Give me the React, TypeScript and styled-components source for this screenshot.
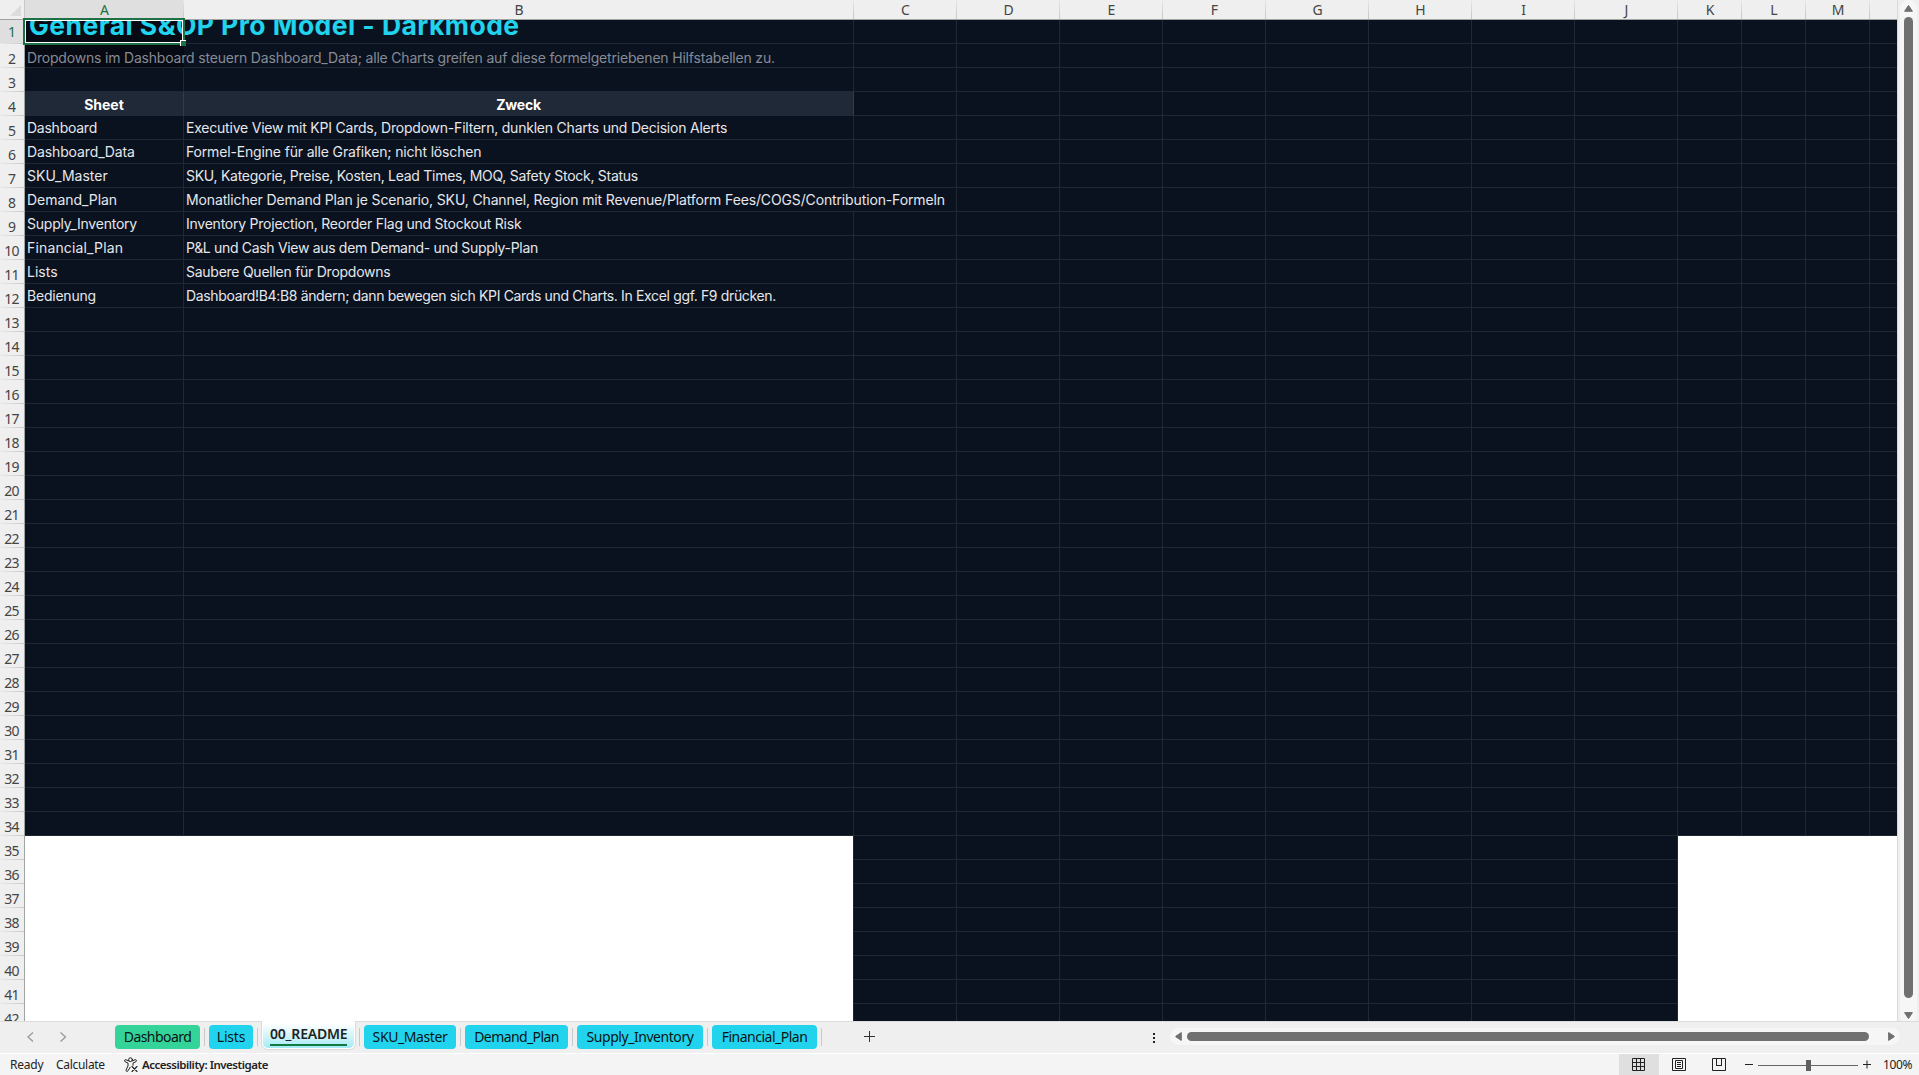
import React from "react";
import styled, { createGlobalStyle, css } from "styled-components";

const CELL_FONT = `Inter, "Liberation Sans", sans-serif`;
const UI_FONT = `"Noto Sans", "Open Sans", sans-serif`;

const Global = createGlobalStyle`
  html, body { margin: 0; padding: 0; overflow: hidden; }
  * { box-sizing: border-box; }
`;

const Window = styled.div`
  width: 1919px;
  height: 1075px;
  display: flex;
  flex-direction: column;
  overflow: hidden;
  background: #efefef;
  font-family: ${UI_FONT};
  color: #222;
`;

const Workspace = styled.div`
  display: flex;
  height: 1021px;
  flex: none;
`;

const Sheet = styled.div`
  width: 1897px;
  height: 1021px;
  display: flex;
  flex-direction: column;
  overflow: hidden;
`;

const ColumnHeads = styled.div`
  display: flex;
  height: 20px;
  flex: none;
  border-bottom: 1px solid #a0a5a2;
`;

const Corner = styled.div`
  width: 25px;
  flex: none;
  display: flex;
  justify-content: flex-end;
  align-items: flex-end;
  padding: 0 3px 3px 0;
  border-right: 1px solid #c8c8c8;
`;

const ColumnHead = styled.div<{ $w: number; $active?: boolean }>`
  width: ${(p) => p.$w}px;
  flex: none;
  display: flex;
  align-items: center;
  justify-content: center;
  padding: 1px 0 0 1px;
  font-size: 14px;
  line-height: 16px;
  color: ${(p) => (p.$active ? "#1e7145" : "#444")};
  background: ${(p) => (p.$active ? "#dfdfdf" : "#efefef")};
  border-right: 1px solid;
  border-image: linear-gradient(#e9e9e9, #c4c4c4) 1;
`;

const Row = styled.div`
  display: flex;
  height: 24px;
  flex: none;
`;

const RowHead = styled.div<{ $active?: boolean }>`
  width: 25px;
  flex: none;
  display: flex;
  align-items: center;
  justify-content: center;
  padding: ${(p) => (p.$active ? "0 1px 2px 0" : "5px 1px 0 0")};
  font-size: 14px;
  line-height: 19px;
  letter-spacing: -0.8px;
  color: ${(p) => (p.$active ? "#1e7145" : "#444")};
  background: ${(p) => (p.$active ? "#dfdfdf" : "#efefef")};
  border-right: 1px solid #a0a5a2;
  background-image: linear-gradient(90deg, #e9e9e9, #c8c8c8);
  background-size: 100% 1px;
  background-position: 0 100%;
  background-repeat: no-repeat;
`;

type Kind = "normal" | "title" | "muted" | "head";

const Cell = styled.div<{
  $w: number;
  $blank?: boolean;
  $head?: boolean;
  $open?: boolean;
  $edge?: boolean;
  $dim?: boolean;
}>`
  width: ${(p) => p.$w}px;
  flex: none;
  height: 24px;
  white-space: nowrap;
  background: ${(p) => (p.$dim ? "#070a12" : "#0b121f")};
  border-right: 1px solid ${(p) => (p.$open ? "transparent" : "#1f2933")};
  border-bottom: 1px solid #1f2933;
  ${(p) =>
    p.$head &&
    css`
      background: #1f2937;
      border-color: #1f2937 #323c49 #1f2937 #1f2937;
      text-align: center;
      box-shadow: 0 -1px 0 #1f2937;
    `}
  ${(p) =>
    p.$blank &&
    css`
      background: #fff;
      border-bottom: 0;
      border-color: ${p.$edge ? "#1f2933" : "#fff"};
    `}
`;

const CellText = styled.span<{ $kind: Kind; $ls: number }>`
  position: relative;
  z-index: 1;
  display: block;
  padding-left: ${(p) => (p.$kind === "head" ? 0 : 2)}px;
  font-family: ${CELL_FONT};
  font-size: 14px;
  line-height: 24px;
  letter-spacing: ${(p) => p.$ls}px;
  color: #e5e7eb;
  ${(p) => p.$kind === "muted" && css`color: #858b96; line-height: 28px;`}
  ${(p) => p.$kind === "head" && css`color: #fff; font-weight: 700; line-height: 25px;`}
  ${(p) =>
    p.$kind === "title" &&
    css`
      color: #22d3ee;
      font-weight: 700;
      font-size: 26.5px;
      padding-left: 4px;
      line-height: 32px;
      margin-top: -11px;
    `}
`;

const TitleClip = styled.div`
  height: 24px;
  width: 600px;
  overflow: hidden;
  position: relative;
  z-index: 1;
`;

const Selection = styled.div`
  position: absolute;
  z-index: 3;
  left: 23px;
  top: 18px;
  width: 162px;
  height: 27px;
  border: 2px solid #1e7145;
  box-shadow: inset 0 0 0 1px #fff;
`;

const FillHandle = styled.div`
  position: absolute;
  right: -3px;
  bottom: -3px;
  width: 6px;
  height: 6px;
  background: #1e7145;
  border-left: 1px solid #fff;
  border-top: 1px solid #fff;
`;

const VerticalBar = styled.div`
  width: 22px;
  height: 1024px;
  padding-left: 2px;
  border-left: 1px solid #d9d9d9;
`;

const VerticalTrack = styled.div`
  width: 17px;
  height: 1024px;
  border-radius: 9px;
  background: #f6f6f6;
  display: flex;
  flex-direction: column;
  align-items: center;
  padding-top: 5px;
`;

const VerticalThumb = styled.div`
  width: 9px;
  height: 981px;
  flex: none;
  margin: 5px 0 14px;
  border-radius: 5px;
  background: #707070;
`;

const TabBar = styled.div`
  height: 32px;
  flex: none;
  display: flex;
  border-top: 1px solid #dcdcdc;
  background: #efefef;
`;

const Arrows = styled.div`
  width: 115px;
  padding: 9px 0 0 25px;
  display: flex;
  gap: 21px;
  flex: none;
`;

const Tab = styled.div<{ $w: number; $c?: string; $ls: number }>`
  width: ${(p) => p.$w}px;
  height: 24px;
  margin-top: 3px;
  flex: none;
  border-radius: 4px;
  background: ${(p) => p.$c || "#22d3ee"};
  color: #0a1414;
  font-size: 14px;
  line-height: 24px;
  text-align: center;
  white-space: nowrap;
  letter-spacing: ${(p) => p.$ls}px;
`;

const Divider = styled.div`
  width: 9px;
  height: 18px;
  margin-top: 6px;
  flex: none;
  display: flex;
  justify-content: center;
  &::before {
    content: "";
    width: 1px;
    background: #c9c9c9;
  }
`;

const ActiveTab = styled.div`
  width: 93px;
  height: 28px;
  margin-top: -1px;
  flex: none;
  padding: 0 7px;
  border: 1px solid #fff;
  border-top: 0;
  border-radius: 0 0 6px 6px;
  background: linear-gradient(#fff 10%, #a4eaf5);
  box-shadow: 0 0 1px 1px #d9d9d9;
  clip-path: inset(0 -2px -2px -2px);
`;

const ActiveLabel = styled.div`
  height: 25px;
  border-bottom: 2px solid #107c41;
  color: #222;
  font-weight: 600;
  font-size: 14px;
  line-height: 26px;
  letter-spacing: -0.2px;
  text-align: center;
  white-space: nowrap;
`;

const AddSheet = styled.div`
  display: flex;
  margin: 8px 0 0 37px;
  width: 13px;
`;

const Dots = styled.div`
  margin: 11px 0 0 auto;
  width: 2px;
  display: grid;
  gap: 2px;
  align-content: start;
  i { width: 2px; height: 2px; background: #222; }
`;

const HorizontalTrack = styled.div`
  width: 730px;
  height: 17px;
  margin: 6px 19px 0 15px;
  padding: 0 5px;
  border-radius: 9px;
  background: #f6f6f6;
  display: flex;
  align-items: center;
`;

const HorizontalThumb = styled.div`
  width: 682px;
  height: 9px;
  margin: 0 19px 0 5px;
  border-radius: 5px;
  background: #707070;
`;

const StatusBar = styled.div`
  height: 22px;
  flex: none;
  display: flex;
  align-items: center;
  border-top: 1px solid #fff;
  background: #f4f4f4;
  font-size: 12px;
  color: #222;
`;

const StatusText = styled.div<{ $w: number; $bold?: boolean; $ls?: number }>`
  width: ${(p) => p.$w}px;
  font-size: ${(p) => (p.$bold ? 11.5 : 12)}px;
  font-weight: ${(p) => (p.$bold ? 600 : 400)};
  letter-spacing: ${(p) => p.$ls ?? 0}px;
  white-space: nowrap;
`;

const Ready = styled.div`
  display: flex;
  align-items: center;
  padding-left: 10px;
`;

const ViewButton = styled.div<{ $active?: boolean }>`
  width: 40px;
  height: 21px;
  display: flex;
  align-items: center;
  justify-content: center;
  background: ${(p) => (p.$active ? "#dfdfdf" : "transparent")};
`;

const Views = styled.div`
  display: flex;
  margin-left: auto;
`;

const Zoom = styled.div`
  width: 180px;
  display: flex;
  align-items: center;
  letter-spacing: -0.4px;
`;

const DARK_END = 34;
const columns: [string, number][] = [
  ["A", 159], ["B", 670], ["C", 103], ["D", 103], ["E", 103], ["F", 103], ["G", 103],
  ["H", 103], ["I", 103], ["J", 103], ["K", 64], ["L", 64], ["M", 64], ["", 28],
];

type Entry = { t: string; ls?: number };
const rows: Record<number, [Entry, Entry?]> = {
  1: [{ t: "General S&OP Pro Model - Darkmode", ls: 0.45 }],
  2: [{ t: "Dropdowns im Dashboard steuern Dashboard_Data; alle Charts greifen auf diese formelgetriebenen Hilfstabellen zu.", ls: -0.19 }],
  4: [{ t: "Sheet" }, { t: "Zweck", ls: -0.2 }],
  5: [{ t: "Dashboard", ls: -0.25 }, { t: "Executive View mit KPI Cards, Dropdown-Filtern, dunklen Charts und Decision Alerts", ls: -0.215 }],
  6: [{ t: "Dashboard_Data", ls: -0.12 }, { t: "Formel-Engine für alle Grafiken; nicht löschen", ls: -0.16 }],
  7: [{ t: "SKU_Master" }, { t: "SKU, Kategorie, Preise, Kosten, Lead Times, MOQ, Safety Stock, Status", ls: -0.27 }],
  8: [{ t: "Demand_Plan", ls: -0.05 }, { t: "Monatlicher Demand Plan je Scenario, SKU, Channel, Region mit Revenue/Platform Fees/COGS/Contribution-Formeln", ls: -0.135 }],
  9: [{ t: "Supply_Inventory", ls: -0.22 }, { t: "Inventory Projection, Reorder Flag und Stockout Risk", ls: -0.24 }],
  10: [{ t: "Financial_Plan", ls: 0.15 }, { t: "P&L und Cash View aus dem Demand- und Supply-Plan", ls: -0.32 }],
  11: [{ t: "Lists" }, { t: "Saubere Quellen für Dropdowns", ls: -0.26 }],
  12: [{ t: "Bedienung", ls: -0.22 }, { t: "Dashboard!B4:B8 ändern; dann bewegen sich KPI Cards und Charts. In Excel ggf. F9 drücken.", ls: -0.35 }],
};

const kindOf = (r: number): Kind => (r === 1 ? "title" : r === 2 ? "muted" : r === 4 ? "head" : "normal");

function GridRow({ n }: { n: number }) {
  const kind = kindOf(n);
  return (
    <Row>
      <RowHead $active={n === 1}>{n}</RowHead>
      {columns.map(([, w], i) => {
        const entry = rows[n]?.[i as 0 | 1];
        const open = (n <= 2 && i === 0) || (n === 8 && i === 1);
        const text = entry && (
          <CellText $kind={kind} $ls={entry.ls ?? 0}>{entry.t}</CellText>
        );
        return (
          <Cell
            key={i}
            $w={w}
            $head={n === 4 && i < 2}
            $open={open}
            $dim={n <= 2 && i === 0}
            $blank={n > DARK_END && (i < 2 || i > 9)}
            $edge={i === 1}
          >
            {kind === "title" && text ? <TitleClip>{text}</TitleClip> : text}
          </Cell>
        );
      })}
    </Row>
  );
}

const Chevron = ({ d }: { d: string }) => (
  <svg width="12" height="12" viewBox="0 0 12 12" fill="none" stroke="#9a9a9a" strokeWidth="1.3"><path d={d} /></svg>
);

const Glyph = styled.svg`
  display: block;
  flex: none;
`;

const Triangle = ({ d, w, h }: { d: string; w: number; h: number }) => (
  <Glyph width={w} height={h} viewBox={`0 0 ${w} ${h}`}>
    <path d={d} fill="#707070" stroke="#707070" strokeWidth="1" strokeLinejoin="round" />
  </Glyph>
);

const AccessibilityIcon = () => (
  <Glyph width="19" height="16" viewBox="0 0 19 16" fill="none" stroke="#222" strokeWidth="1" strokeLinecap="round" strokeLinejoin="round">
    <circle cx="7.5" cy="2.7" r="1.9" />
    <path d="M5.7 3.9L3 2.8C1.6 2.3 .8 4 2.1 4.7L5 6.1V8.8L3.1 13C2.7 14.4 4.2 15 4.9 13.9L7.2 10.2" />
    <path d="M9.3 3.9L12 2.8C13.4 2.3 14.2 4 12.9 4.7L10 6.1V8.3" />
    <path d="M9 9.5L14 14.5M14 9.5L9 14.5" strokeWidth="1.1" />
  </Glyph>
);

export default function App() {
  return (
    <Window>
      <Global />
      <Workspace>
        <Sheet>
          <ColumnHeads>
            <Corner><Glyph width="11" height="11"><path d="M11 0V11H0Z" fill="#dcdcdc" /></Glyph></Corner>
            {columns.map(([name, w], i) => (
              <ColumnHead key={i} $w={w} $active={i === 0}>{name}</ColumnHead>
            ))}
          </ColumnHeads>
          {Array.from({ length: 42 }, (_, i) => <GridRow key={i} n={i + 1} />)}
          <Selection><FillHandle /></Selection>
        </Sheet>
        <VerticalBar>
          <VerticalTrack>
            <Triangle w={9} h={7} d="M4.2 .8H4.8L8.4 6.3H.6Z" />
            <VerticalThumb />
            <Triangle w={9} h={7} d="M.6 .6H8.4L4.8 6.2H4.2Z" />
          </VerticalTrack>
        </VerticalBar>
      </Workspace>
      <TabBar>
        <Arrows><Chevron d="M8 1.5L3 6L8 10.5" /><Chevron d="M2.5 1.5L7.5 6L2.5 10.5" /></Arrows>
        <Tab $w={85} $ls={-0.55} $c="#34d399">Dashboard</Tab><Divider />
        <Tab $w={44} $ls={-0.2}>Lists</Tab><Divider />
        <ActiveTab><ActiveLabel>00_README</ActiveLabel></ActiveTab><Divider />
        <Tab $w={92} $ls={-0.4}>SKU_Master</Tab><Divider />
        <Tab $w={103} $ls={-0.6}>Demand_Plan</Tab><Divider />
        <Tab $w={126} $ls={-0.45}>Supply_Inventory</Tab><Divider />
        <Tab $w={105} $ls={-0.5}>Financial_Plan</Tab><Divider />
        <AddSheet><Glyph width="13" height="13" stroke="#333"><path d="M1 6.5H12M6.5 1V12" /></Glyph></AddSheet>
        <Dots><i /><i /><i /></Dots>
        <HorizontalTrack>
          <Triangle w={7} h={9} d="M6.3 .6V8.4L.8 4.8V4.2Z" />
          <HorizontalThumb />
          <Triangle w={7} h={9} d="M.6 .6L6.2 4.2V4.8L.6 8.4Z" />
        </HorizontalTrack>
      </TabBar>
      <StatusBar>
        <Ready>
          <StatusText $w={46} $ls={-0.2}>Ready</StatusText>
          <StatusText $w={67} $ls={-0.3}>Calculate</StatusText>
          <AccessibilityIcon />
          <StatusText $w={130} $bold $ls={-0.47}>Accessibility: Investigate</StatusText>
        </Ready>
        <Views>
          <ViewButton $active><Glyph width="14" height="13" fill="none" stroke="#222"><path d="M.5.5h12v12H.5zM4.5 0v13M8.5 0v13M0 4.5h13M0 8.5h13" /></Glyph></ViewButton>
          <ViewButton><Glyph width="14" height="13" fill="none" stroke="#222"><path d="M.5.5h13v12H.5zM3.5 2.5h7v8h-7zM5 4.5h4M5 6.5h4M5 8.5h4" /></Glyph></ViewButton>
          <ViewButton><Glyph width="14" height="13" fill="none" stroke="#222"><path d="M.5.5h13v12H.5zM4.5 0v7M9.5 0v7.5M4 7.5h6" /></Glyph></ViewButton>
        </Views>
        <Zoom>
          <Glyph width="144" height="14" stroke="#222" fill="none">
            <path d="M6 6.5h8M124 6.5h8M128 2.5v8" />
            <path d="M19 7.5h100" stroke="#666" />
            <path d="M67 2h5v11h-5z" fill="#606060" stroke="none" />
          </Glyph>
          <span>100%</span>
        </Zoom>
      </StatusBar>
    </Window>
  );
}
